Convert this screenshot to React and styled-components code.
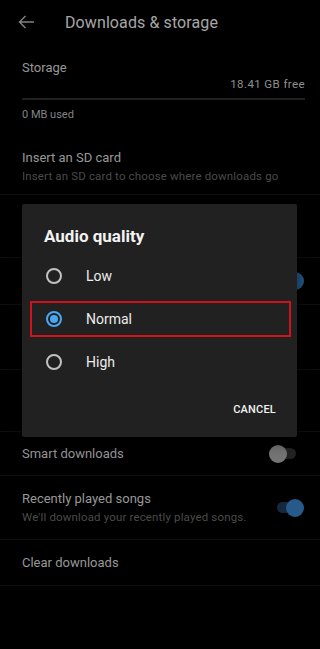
import React from 'react';
import styled, { createGlobalStyle } from 'styled-components';

const Global = createGlobalStyle`
  html, body {
    margin: 0;
    padding: 0;
    background: #000;
  }
  body {
    font-family: Roboto, "Noto Sans", sans-serif;
  }
`;

const Screen = styled.div`
  position: relative;
  width: 320px;
  height: 649px;
  overflow: hidden;
  background: #000;
`;

const Header = styled.div`
  display: flex;
  align-items: center;
  height: 44px;
  padding-left: 18px;
  gap: 30px;
`;

const HeaderTitle = styled.span`
  font-size: 16px;
  color: #c4c4c4;
  letter-spacing: 0.1px;
`;

const Section = styled.div`
  display: flex;
  flex-direction: column;
  padding: ${(p) => p.pad || '0 22px'};
  height: ${(p) => p.h}px;
  box-sizing: border-box;
  border-bottom: ${(p) => (p.divider ? '1px solid #121212' : 'none')};
`;

const Row = styled.div`
  display: flex;
  align-items: center;
  justify-content: space-between;
  padding: 0 22px;
  height: ${(p) => p.h}px;
  box-sizing: border-box;
  border-bottom: 1px solid #121212;
`;

const Texts = styled.div`
  display: flex;
  flex-direction: column;
  gap: 3px;
`;

const Title = styled.span`
  font-size: 13px;
  line-height: 16px;
  color: #b2b2b2;
`;

const Sub = styled.span`
  font-size: 11.5px;
  line-height: 14px;
  color: #585858;
  letter-spacing: 0.15px;
`;

const FreeText = styled.span`
  align-self: flex-end;
  font-size: 11.5px;
  line-height: 16px;
  color: #a8a8a8;
  letter-spacing: 0.4px;
`;

const Bar = styled.div`
  height: 2px;
  background: #262626;
  margin: 6px 0 7px;
`;

const Used = styled.span`
  font-size: 11px;
  line-height: 16px;
  color: #9c9c9c;
`;

const Track = styled.div`
  position: relative;
  width: 22px;
  height: 11px;
  border-radius: 6px;
  background: ${(p) => (p.on ? '#1b3048' : '#2a2a2a')};
  margin-right: ${(p) => (p.on ? '-1px' : '2px')};
`;

const Knob = styled.div`
  position: absolute;
  top: 50%;
  width: 18px;
  height: 18px;
  border-radius: 50%;
  transform: translateY(-50%);
  left: ${(p) => (p.on ? '9px' : '-5px')};
  background: ${(p) => (p.on ? '#2d6aa3' : '#8a8a8a')};
`;

const Toggle = ({ on }) => (
  <Track on={on}>
    <Knob on={on} />
  </Track>
);

const Backdrop = styled.div`
  position: absolute;
  inset: 0;
  background: rgba(0, 0, 0, 0.15);
`;

const Dialog = styled.div`
  position: absolute;
  left: 22px;
  top: 204px;
  width: 275px;
  height: 233px;
  box-sizing: border-box;
  background: #212121;
  border-radius: 2px;
  padding: 20px 21px 19px 0;
  display: flex;
  flex-direction: column;
  box-shadow: 0 4px 16px rgba(0, 0, 0, 0.6);
`;

const DialogTitle = styled.div`
  font-size: 17px;
  font-weight: 700;
  line-height: 24px;
  color: #f2f2f2;
  padding-left: 22px;
  margin-bottom: 10px;
`;

const Options = styled.div`
  display: flex;
  flex-direction: column;
  gap: 7px;
  margin-right: -15px;
`;

const Option = styled.div`
  display: flex;
  align-items: center;
  gap: 24px;
  height: 36px;
  box-sizing: border-box;
  margin-left: 8px;
  padding-left: ${(p) => (p.marked ? '14px' : '16px')};
  border: ${(p) => (p.marked ? '2px solid #d0131b' : 'none')};
`;

const Radio = styled.span`
  width: 16px;
  height: 16px;
  box-sizing: border-box;
  border-radius: 50%;
  border: 2px solid ${(p) => (p.checked ? '#4aa8f2' : '#c2c2c2')};
  display: flex;
  align-items: center;
  justify-content: center;
  &::after {
    content: '';
    display: ${(p) => (p.checked ? 'block' : 'none')};
    width: 8px;
    height: 8px;
    border-radius: 50%;
    background: #4aa8f2;
  }
`;

const OptionLabel = styled.span`
  font-size: 14px;
  color: #ececec;
`;

const Actions = styled.div`
  margin-top: auto;
  display: flex;
  justify-content: flex-end;
`;

const Cancel = styled.span`
  font-size: 11px;
  font-weight: 500;
  line-height: 16px;
  color: #f0f0f0;
  letter-spacing: 0.2px;
`;

const options = ['Low', 'Normal', 'High'];

export default function App() {
  return (
    <>
      <Global />
      <Screen>
        <Header>
          <svg width="17" height="14" viewBox="0 0 17 14" fill="none" stroke="#9a9a9a" strokeWidth="1.4">
            <path d="M16 7H1.5M7.5 1L1.5 7l6 6" />
          </svg>
          <HeaderTitle>Downloads &amp; storage</HeaderTitle>
        </Header>

        <Section h={86} pad="16px 15px 0 22px">
          <Title>Storage</Title>
          <FreeText>18.41 GB free</FreeText>
          <Bar />
          <Used>0 MB used</Used>
        </Section>

        <Section h={65} divider pad="20px 22px 0">
          <Texts>
            <Title>Insert an SD card</Title>
            <Sub>Insert an SD card to choose where downloads go</Sub>
          </Texts>
        </Section>

        <Row h={63}>
          <Texts>
            <Title>Audio quality</Title>
            <Sub>Normal</Sub>
          </Texts>
        </Row>
        <Row h={47}>
          <Title>Download over Wi-Fi only</Title>
          <Toggle on />
        </Row>
        <Row h={65}>
          <Texts>
            <Title>Video quality</Title>
            <Sub>Medium</Sub>
          </Texts>
        </Row>
        <Row h={62}>
          <Texts>
            <Title>Auto-downloads</Title>
            <Sub>Download music automatically</Sub>
          </Texts>
        </Row>

        <Row h={44}>
          <Title>Smart downloads</Title>
          <Toggle />
        </Row>
        <Row h={64}>
          <Texts>
            <Title>Recently played songs</Title>
            <Sub>We'll download your recently played songs.</Sub>
          </Texts>
          <Toggle on />
        </Row>
        <Row h={46}>
          <Title>Clear downloads</Title>
        </Row>

        <Backdrop />
        <Dialog>
          <DialogTitle>Audio quality</DialogTitle>
          <Options>
            {options.map((o) => (
              <Option key={o} marked={o === 'Normal'}>
                <Radio checked={o === 'Normal'} />
                <OptionLabel>{o}</OptionLabel>
              </Option>
            ))}
          </Options>
          <Actions>
            <Cancel>CANCEL</Cancel>
          </Actions>
        </Dialog>
      </Screen>
    </>
  );
}
